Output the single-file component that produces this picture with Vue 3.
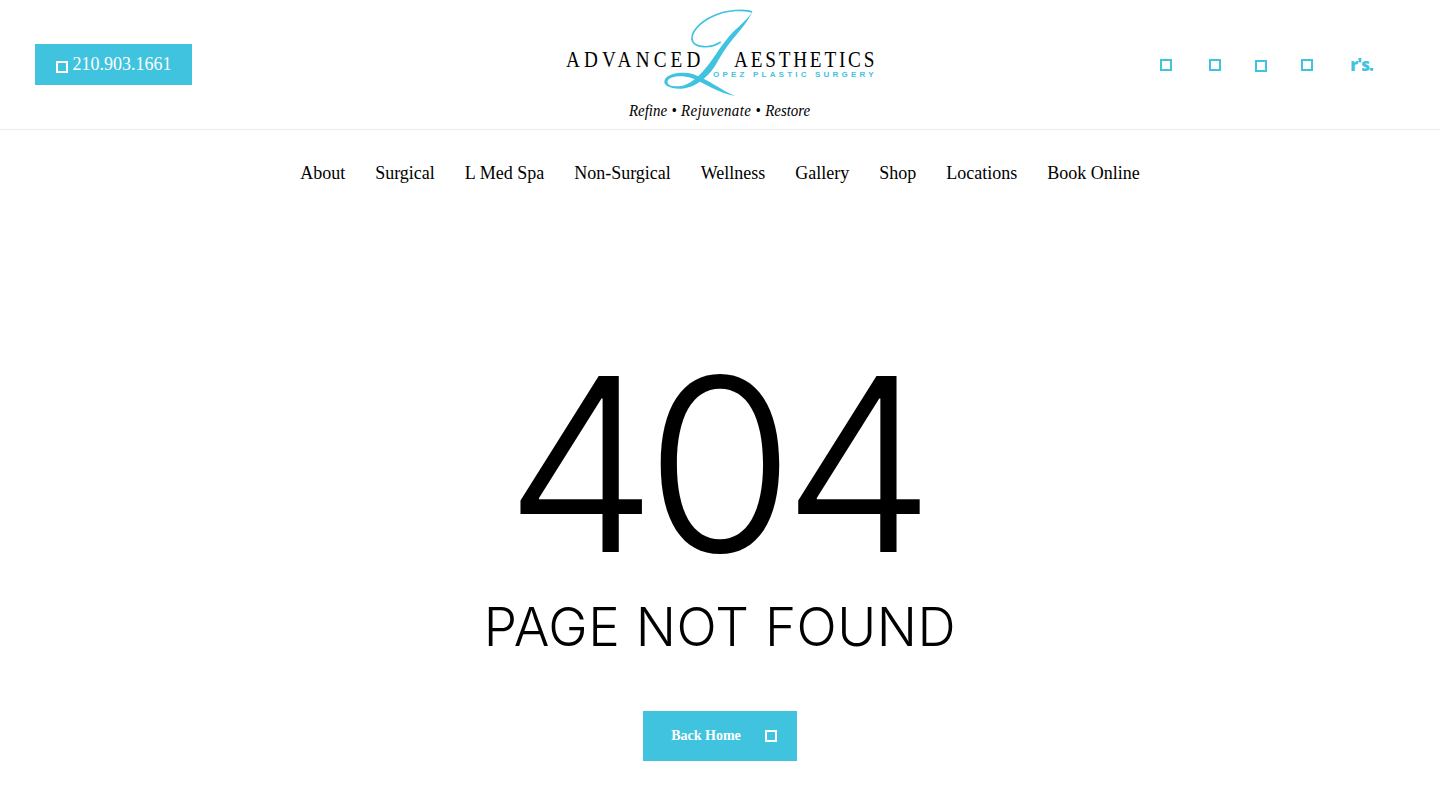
<script setup>
const links = ['About', 'Surgical', 'L Med Spa', 'Non-Surgical', 'Wellness', 'Gallery', 'Shop', 'Locations', 'Book Online']
const socials = [0, 1, 2, 3]
</script>

<template>
  <div class="page">
    <header class="top">
      <a class="phone"><span class="box box-white"></span>210.903.1661</a>
      <div class="logo">
        <svg class="script-l" viewBox="0 0 1020 390" aria-hidden="true">
          <path d="M606 36 C 590 28 530 28 490 48 C 445 68 418 102 428 124 C 436 142 480 148 512 126" fill="none" stroke="#3fc3de" stroke-width="5"/>
          <path d="M608 33 C 596 62 570 92 548 118 C 528 142 510 172 495 198 C 470 238 430 264 395 266 C 360 268 335 255 345 238 C 355 220 395 213 430 223 C 470 236 515 272 556 288 C 510 282 465 250 425 234 C 395 224 360 228 353 242 C 348 258 375 262 398 257 C 430 248 460 215 482 185 C 500 160 515 135 538 108 C 565 78 598 55 608 33 Z" fill="#3fc3de"/>
        </svg>
        <span class="word word-left">ADVANCED</span>
        <span class="word word-right">AESTHETICS</span>
        <div class="sub">OPEZ PLASTIC SURGERY</div>
        <div class="tagline">Refine • <span class="wide">Rejuvenate</span> • Restore</div>
      </div>
      <div class="social">
        <span v-for="s in socials" :key="s" class="box box-cyan"></span>
        <span class="rs">r's.</span>
      </div>
    </header>
    <nav class="nav">
      <a v-for="l in links" :key="l">{{ l }}</a>
    </nav>
    <main class="main">
      <h1>404</h1>
      <h2>PAGE NOT FOUND</h2>
      <a class="back">Back Home<span class="box box-white small"></span></a>
    </main>
  </div>
</template>

<style>
html, body { margin: 0; background: #fff; }
</style>

<style scoped>
.page { width: 1440px; height: 810px; overflow: hidden; font-family: "Liberation Serif", serif; color: #000; }
.top { height: 129px; border-bottom: 1px solid #ececec; display: grid; grid-template-columns: 1fr 340px 1fr; align-items: center; padding: 0 35px; box-sizing: content-box; width: 1370px; }
.phone { justify-self: start; width: 157px; height: 41px; background: #3fc3de; color: #fff; font-size: 18px; display: flex; align-items: center; justify-content: center; gap: 5px; }
.phone .box { width: 12px; height: 12px; margin-top: 4px; }
.box { display: inline-block; box-sizing: border-box; width: 13px; height: 13px; border: 2px solid; }
.box-white { border-color: #fff; }
.box-cyan { border-color: #3fc3de; width: 12px; height: 12px; }
.box-cyan:nth-child(1) { margin-right: 3px; }
.box-cyan:nth-child(3) { margin-top: 2px; }
.logo { position: relative; height: 129px; width: 340px; }
.script-l { position: absolute; left: 0; top: 0; width: 340px; height: 130px; }
.word { position: absolute; top: 45px; font-size: 24px; line-height: 28px; color: #000; white-space: nowrap; transform: scaleX(.8); transform-origin: left; }
.word-left { left: 16px; letter-spacing: 5.2px; }
.word-right { left: 184px; letter-spacing: 3.5px; }
.sub { position: absolute; left: 163px; top: 70px; font-family: "Liberation Sans", sans-serif; font-weight: 700; font-size: 8px; line-height: 10px; letter-spacing: 3.2px; color: #3fc3de; white-space: nowrap; }
.tagline { position: absolute; left: 79px; top: 101px; font-style: italic; font-size: 16px; line-height: 20px; color: #000; white-space: pre; word-spacing: .7px; transform: scaleX(.93); transform-origin: left; }
.wide { letter-spacing: .45px; }
.social { justify-self: end; display: flex; align-items: center; gap: 34px; margin-right: 32px; }
.rs { font-family: "Open Sans", sans-serif; font-weight: 800; color: #3fc3de; font-size: 17px; line-height: 18px; letter-spacing: -1px; margin-left: 3px; }
.nav { display: flex; justify-content: center; gap: 30px; font-size: 18px; line-height: 22px; padding-top: 32px; }
.main { display: flex; flex-direction: column; align-items: center; padding-top: 150px; }
h1 { margin: 0 0 0 -12px; font-family: Inter, sans-serif; font-weight: 300; font-size: 242px; line-height: 260px; letter-spacing: -12px; }
h2 { margin: 3px 0 0; font-family: Inter, sans-serif; font-weight: 300; font-size: 53px; line-height: 60px; letter-spacing: .5px; }
.back { margin-top: 54px; width: 154px; height: 50px; padding-left: 8px; box-sizing: border-box; background: #3fc3de; color: #fff; font-weight: 700; font-size: 14px; display: flex; align-items: center; justify-content: center; gap: 24px; }
.small { width: 12px; height: 12px; }
</style>
